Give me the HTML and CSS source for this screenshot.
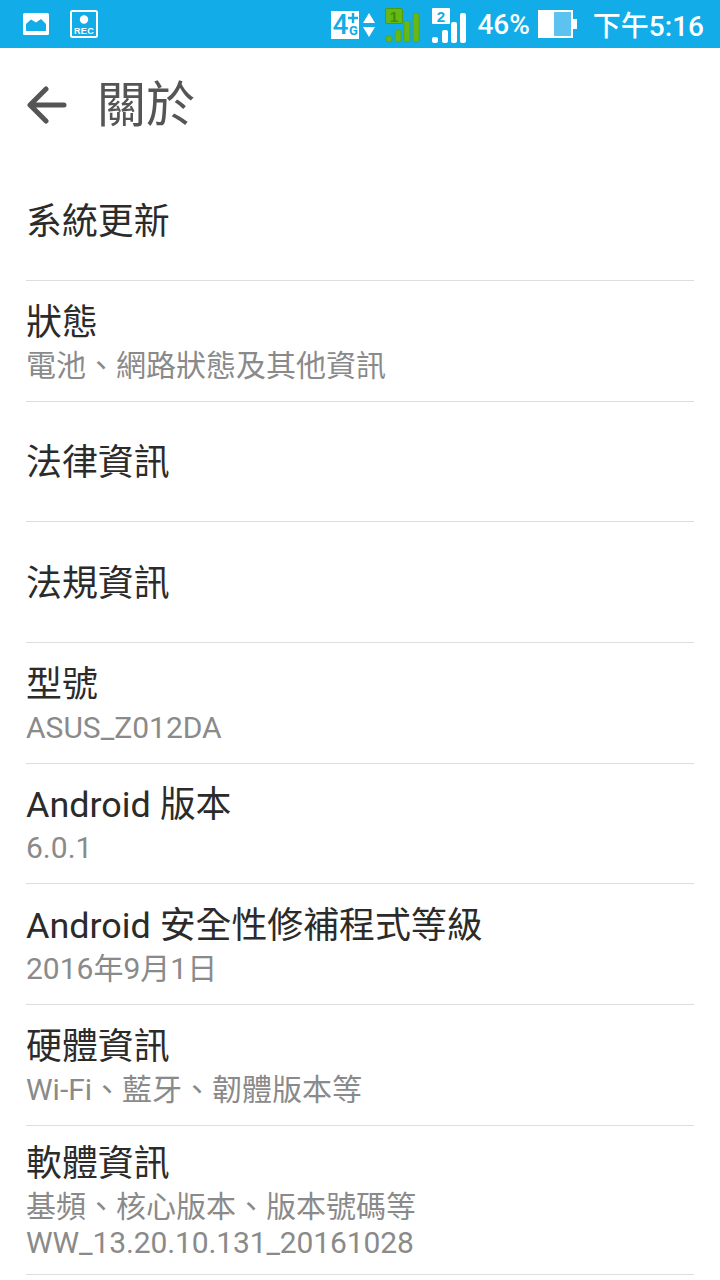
FILE: index.html
```html
<!DOCTYPE html>
<html lang="zh-Hant">
<head>
    <meta charset="UTF-8">
    <meta name="viewport" content="width=device-width, initial-scale=1.0">
    <title>關於</title>
    <link rel="stylesheet" href="styles.css">
</head>
<body>
    <div class="status-bar">
        <div class="status-left">
            <svg class="ic-photo" width="26" height="22" viewBox="0 0 26 22">
                <rect x="0" y="0" width="26" height="22" rx="1.5" fill="#fff"/>
                <path d="M3 18V11L8 6.5L13 9.5L18 6L23 11V18Z" fill="#12ace8"/>
            </svg>
            <svg class="ic-rec" width="28" height="28" viewBox="0 0 28 28">
                <rect x="1" y="1" width="26" height="26" rx="1.5" fill="none" stroke="#fff" stroke-width="2"/>
                <circle cx="14" cy="9.5" r="4.2" fill="#fff"/>
                <text x="14" y="24" class="rec-text">REC</text>
            </svg>
        </div>
        <div class="status-right">
            <div class="net-box">
                <span class="net-four">4</span>
                <span class="net-side">
                    <svg width="10" height="10" viewBox="0 0 10 10"><path d="M5 0V10M0 5H10" stroke="#12ace8" stroke-width="2.4"/></svg>
                    <b>G</b>
                </span>
            </div>
            <svg class="ic-arrows" width="12" height="24" viewBox="0 0 12 24">
                <path d="M6 0L12 10H0Z" fill="#fff"/>
                <path d="M0 14H12L6 24Z" fill="#fff"/>
            </svg>
            <svg class="ic-sim" width="35" height="35" viewBox="0 0 35 35">
                <rect x="0.5" y="0.5" width="17" height="15" rx="1.5" fill="#66b814" stroke="#4d9a10"/>
                <text x="9" y="13.5" class="sim-text sim-one">1</text>
                <rect x="1" y="28" width="6" height="6" rx="2" fill="#66b814" stroke="#4d9a10" stroke-width="0.5"/>
                <rect x="10" y="22" width="6" height="12" rx="2" fill="#66b814" stroke="#4d9a10" stroke-width="0.5"/>
                <rect x="19" y="13" width="6" height="21" rx="2" fill="#66b814" stroke="#4d9a10" stroke-width="0.5"/>
                <rect x="28" y="5" width="6" height="29" rx="2" fill="#66b814" stroke="#4d9a10" stroke-width="0.5"/>
            </svg>
            <svg class="ic-sim ic-sim-two" width="35" height="35" viewBox="0 0 35 35">
                <rect x="0" y="0" width="18" height="16" rx="1" fill="#fff"/>
                <text x="9" y="13.5" class="sim-text sim-two">2</text>
                <rect x="0" y="29" width="6" height="6" rx="2" fill="#fff"/>
                <rect x="10" y="22" width="6" height="13" rx="2" fill="#fff"/>
                <rect x="19" y="14" width="6" height="21" rx="2" fill="#fff"/>
                <rect x="28" y="5" width="6" height="30" rx="2" fill="#fff"/>
            </svg>
            <span class="battery-pct">46%</span>
            <svg class="ic-battery" width="40" height="28" viewBox="0 0 40 28">
                <rect x="1" y="1" width="33" height="26" fill="#5cc3f0" stroke="#fff" stroke-width="2"/>
                <rect x="1" y="1" width="15" height="26" fill="#fff"/>
                <rect x="34" y="9" width="5" height="10" fill="#fff"/>
            </svg>
            <span class="clock">下午5:16</span>
        </div>
    </div>

    <div class="app-bar">
        <svg class="ic-back" width="40" height="38" viewBox="0 0 40 38">
            <path d="M37 19H4M19 3L3 19L19 35" fill="none" stroke="#555" stroke-width="5" stroke-linecap="round" stroke-linejoin="round"/>
        </svg>
        <h1 class="page-title">關於</h1>
    </div>

    <ul class="about-list">
        <li class="row row-single"><span class="row-title">系統更新</span></li>
        <li class="row"><span class="row-title">狀態</span><span class="row-sub">電池、網路狀態及其他資訊</span></li>
        <li class="row row-single"><span class="row-title">法律資訊</span></li>
        <li class="row row-single"><span class="row-title">法規資訊</span></li>
        <li class="row"><span class="row-title">型號</span><span class="row-sub">ASUS_Z012DA</span></li>
        <li class="row"><span class="row-title">Android 版本</span><span class="row-sub">6.0.1</span></li>
        <li class="row"><span class="row-title">Android 安全性修補程式等級</span><span class="row-sub">2016年9月1日</span></li>
        <li class="row"><span class="row-title">硬體資訊</span><span class="row-sub">Wi-Fi、藍牙、韌體版本等</span></li>
        <li class="row row-tall"><span class="row-title">軟體資訊</span><span class="row-sub">基頻、核心版本、版本號碼等</span><span class="row-sub row-build">WW_13.20.10.131_20161028</span></li>
    </ul>
</body>
</html>
```

FILE: styles.css
```css
*{
    margin: 0;
    padding: 0;
    box-sizing: border-box;
}
body{
    width: 720px;
    height: 1280px;
    overflow: hidden;
    background-color: #fff;
    font-family: Roboto, "Noto Sans CJK TC", sans-serif;
}

/* status bar */
.status-bar{
    height: 48px;
    background-color: #12ace8;
    display: flex;
    justify-content: space-between;
    align-items: center;
    padding: 0 16px 0 23px;
    color: #fff;
}
.status-left{
    display: flex;
    align-items: center;
    gap: 21px;
}
.status-right{
    display: flex;
    align-items: center;
}
.rec-text{
    font-family: "Liberation Sans", sans-serif;
    font-size: 9px;
    font-weight: bold;
    letter-spacing: 0.4px;
    fill: #fff;
    text-anchor: middle;
}
.net-box{
    width: 28px;
    height: 28px;
    margin-top: 2px;
    background-color: #fff;
    color: #12ace8;
    display: flex;
    align-items: center;
    justify-content: center;
    font-weight: 500;
    line-height: 1;
}
.net-four{
    font-size: 28px;
}
.net-side{
    display: flex;
    flex-direction: column;
    align-items: center;
    gap: 1px;
    font-size: 13px;
}
.net-side svg{
    display: block;
}
.net-side b{
    line-height: 13px;
}
.ic-arrows{
    margin-left: 4px;
    margin-top: 2px;
}
.ic-sim{
    margin-left: 10px;
    margin-top: 2px;
}
.ic-sim-two{
    margin-left: 12px;
}
.sim-text{
    font-family: "Liberation Sans", sans-serif;
    font-size: 15px;
    font-weight: bold;
    text-anchor: middle;
}
.sim-one{
    fill: #3f8f0c;
}
.sim-two{
    fill: #12ace8;
}
.battery-pct{
    font-size: 28px;
    font-weight: 500;
    margin-left: 10px;
}
.ic-battery{
    margin-left: 8px;
}
.clock{
    font-size: 28px;
    font-weight: 500;
    margin-left: 15px;
}

/* header */
.app-bar{
    height: 112.3px;
    display: flex;
    align-items: center;
    padding: 2px 0 0 27px;
}
.page-title{
    font-size: 49px;
    font-weight: 400;
    color: #555;
    margin-left: 30px;
    line-height: 1;
}

/* list */
.about-list{
    list-style: none;
    margin: 0 26px;
}
.row{
    height: 120.67px;
    padding-top: 1px;
    display: flex;
    flex-direction: column;
    justify-content: center;
    border-bottom: 1px solid #ddd;
}
.row-single{
    padding-top: 4px;
}
.row-tall{
    height: 149.5px;
}
.row-title{
    font-size: 35.9px;
    line-height: 48px;
    color: #2b2b2b;
}
.row-sub{
    font-size: 30px;
    line-height: 36px;
    color: #8a8a8a;
}
.row-title + .row-sub{
    margin-top: 1px;
}
.row-build{
    letter-spacing: -0.12px;
}
```
